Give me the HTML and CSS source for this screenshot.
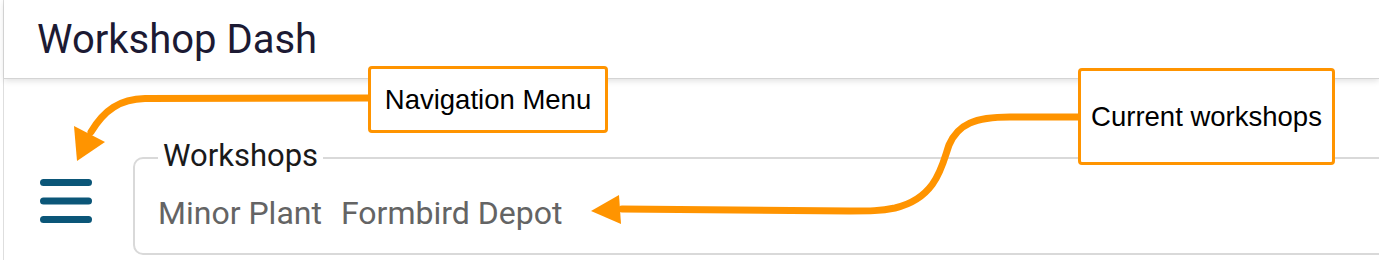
FILE: index.html
```html
<!DOCTYPE html>
<html lang="en">
<head>
<meta charset="utf-8">
<title>Workshop Dash</title>
<link rel="stylesheet" href="styles.css">
</head>
<body>
<div class="app">
  <header class="topbar">
    <h1 class="title">Workshop Dash</h1>
  </header>
  <main class="main">
    <button class="menu-btn" aria-label="Navigation menu">
      <svg width="52" height="44" viewBox="0 0 52 44">
        <g stroke="#0b5678" stroke-width="7" stroke-linecap="round">
          <line x1="3.5" y1="3.5" x2="48.5" y2="3.5"/>
          <line x1="3.5" y1="22" x2="48.5" y2="22"/>
          <line x1="3.5" y1="40.5" x2="48.5" y2="40.5"/>
        </g>
      </svg>
    </button>
    <fieldset class="workshops">
      <legend class="workshops-legend">Workshops</legend>
      <div class="workshop-list">
        <span class="workshop">Minor Plant</span>
        <span class="workshop">Formbird Depot</span>
      </div>
    </fieldset>
  </main>

  <svg class="annotations" width="1379" height="262" viewBox="0 0 1379 262">
    <g fill="none" stroke="#ff9400" stroke-width="7" stroke-linecap="round">
      <path d="M 370 98 L 145 98.5 C 120 99, 104 110, 91 132"/>
      <path d="M 1078 117 L 1010 117 C 975 117, 958 124, 949 145 C 942 165, 937 198, 895 208 C 880 211, 870 211, 850 211 L 622 209"/>
    </g>
    <g fill="#ff9400">
      <polygon points="77,161 74,126 105,142"/>
      <polygon points="591,211 619,195 621,224"/>
    </g>
  </svg>
  <div class="callout callout-nav">Navigation Menu</div>
  <div class="callout callout-current">Current workshops</div>
</div>
</body>
</html>
```
FILE: styles.css
```css
html, body {
  margin: 0;
  padding: 0;
  background: #ffffff;
  overflow: hidden;
}

.app {
  position: relative;
  width: 1379px;
  height: 262px;
  overflow: hidden;
  font-family: Roboto, "Noto Sans", sans-serif;
}

.app::before {
  content: "";
  position: absolute;
  left: 3px;
  top: 0;
  width: 1px;
  height: 260px;
  background: #dedede;
}

.topbar {
  height: 78px;
  margin-left: 4px;
  display: flex;
  align-items: center;
  padding-left: 33px;
  background: #ffffff;
  border-bottom: 1px solid #d4d4d4;
  box-shadow: 0 2px 6px rgba(0, 0, 0, 0.12);
  position: relative;
  z-index: 1;
}

.title {
  margin: 0;
  font-size: 40px;
  line-height: 40px;
  font-weight: 400;
  color: #1c1a33;
  padding-top: 1px;
}

.main {
  display: flex;
  align-items: flex-start;
  padding-left: 40px;
}

.menu-btn {
  margin: 100px 0 0 0;
  padding: 0;
  border: 0;
  background: none;
  width: 52px;
  height: 44px;
  display: block;
}

.menu-btn svg {
  display: block;
}

.workshops {
  flex: 0 0 auto;
  width: 1300px;
  margin: 58px 0 0 41px;
  padding: 15px 0 21px 23px;
  border: 2px solid #d9d9d9;
  border-radius: 10px;
  min-width: 0;
}

.workshops-legend {
  font-size: 31px;
  line-height: 37px;
  color: #1a1a1a;
  padding: 0 5px 5px 5px;
  margin-left: 0;
}

.workshop-list {
  display: flex;
  gap: 19px;
  font-size: 32px;
  line-height: 38px;
  color: #646464;
}

.annotations {
  position: absolute;
  left: 0;
  top: 0;
  z-index: 2;
  pointer-events: none;
}

.callout {
  position: absolute;
  z-index: 3;
  box-sizing: border-box;
  display: flex;
  align-items: center;
  justify-content: center;
  background: #ffffff;
  border: 3px solid #ff9400;
  border-radius: 4px;
  font-family: "Liberation Sans", Arial, sans-serif;
  font-size: 27.5px;
  color: #000000;
  white-space: nowrap;
}

.callout-nav {
  left: 368px;
  top: 66px;
  width: 240px;
  height: 67px;
}

.callout-current {
  left: 1078px;
  top: 68px;
  width: 257px;
  height: 97px;
}
```
